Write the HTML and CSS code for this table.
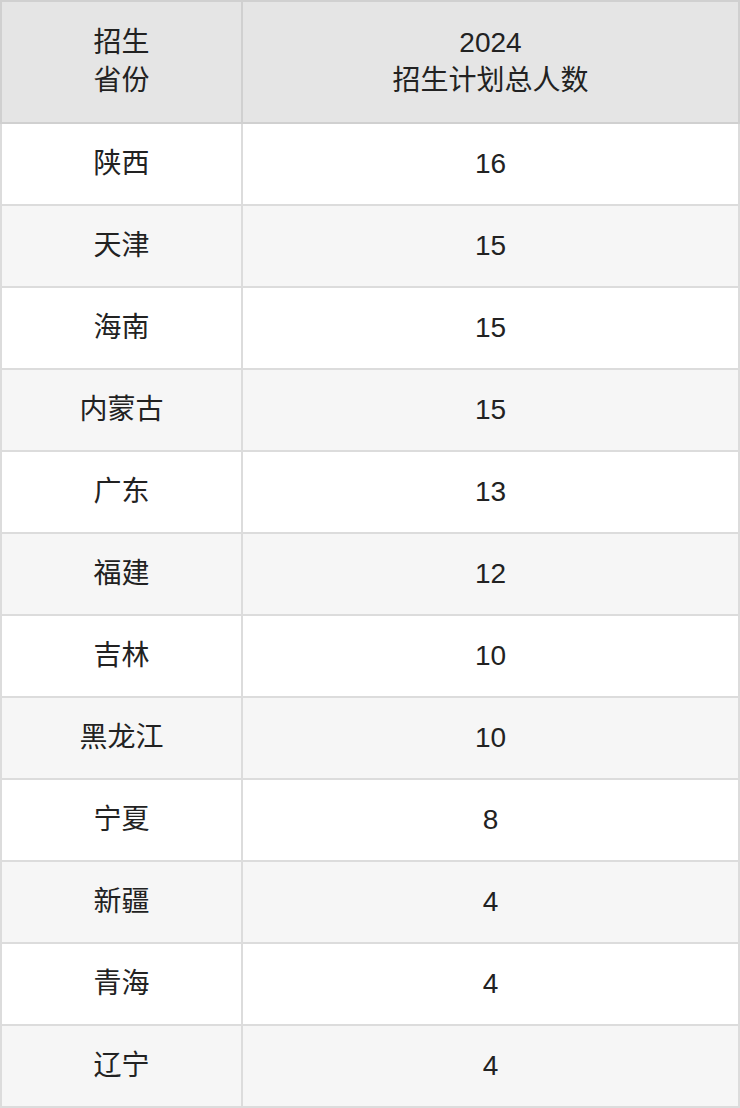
FILE: index.html
```html
<!DOCTYPE html>
<html lang="zh">
<head>
<meta charset="utf-8">
<link rel="stylesheet" href="styles.css">
</head>
<body>
<table class="plan">
  <thead>
    <tr><th class="c1">招生<br>省份</th><th class="c2">2024<br>招生计划总人数</th></tr>
  </thead>
  <tbody>
    <tr><td>陕西</td><td>16</td></tr>
    <tr><td>天津</td><td>15</td></tr>
    <tr><td>海南</td><td>15</td></tr>
    <tr><td>内蒙古</td><td>15</td></tr>
    <tr><td>广东</td><td>13</td></tr>
    <tr><td>福建</td><td>12</td></tr>
    <tr><td>吉林</td><td>10</td></tr>
    <tr><td>黑龙江</td><td>10</td></tr>
    <tr><td>宁夏</td><td>8</td></tr>
    <tr><td>新疆</td><td>4</td></tr>
    <tr><td>青海</td><td>4</td></tr>
    <tr><td>辽宁</td><td>4</td></tr>
  </tbody>
</table>
</body>
</html>
```
FILE: styles.css
```css
html, body { margin: 0; padding: 0; background: #fff; }
body { font-family: "Liberation Sans", "Noto Sans CJK SC", sans-serif; color: #222; }
.plan { width: 740px; border-collapse: collapse; table-layout: fixed; }
.plan th, .plan td {
  border: 2px solid #dcdcdc;
  text-align: center;
  vertical-align: middle;
  font-size: 28px;
  padding: 0;
}
.plan th {
  background: #e5e5e5;
  font-weight: normal;
  height: 120px;
  line-height: 38px;
  border-color: #d0d0d0;
}
.plan td { height: 80px; line-height: 30px; }
.plan .c1 { width: 239px; }
.plan tbody tr:nth-child(even) td { background: #f6f6f6; }
```
